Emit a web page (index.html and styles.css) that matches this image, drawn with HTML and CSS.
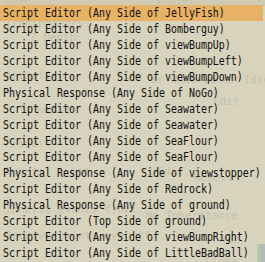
FILE: index.html
```html
<!DOCTYPE html>
<html>
<head>
  <meta charset="UTF-8">
  <title>Event list</title>
  <link rel="stylesheet" href="styles.css">
</head>
<body>
  <div class="screen">
    <!-- faded dialog behind the popup list -->
    <div class="ghost">
      <div class="ghost-head"><span>Name:</span><span class="g-player">Player</span><span class="g-arrow">▾</span></div>
      <div class="ghost-row g1"><span>Transparency:</span></div>
      <div class="ghost-row g2"><span class="g-ind">Z Depth:</span></div>
      <div class="ghost-row g3"><span>Animation:</span><span class="g-play">Play</span><span class="g-anim">er Underwater Idle rig</span></div>
      <div class="ghost-row g4"><span class="g-ind2">Sequence</span><span class="g-edit">Edit</span></div>
      <div class="ghost-row g5"><span>Preset:</span></div>
      <div class="ghost-row g6"><span>Events:</span><span class="g-add">Add</span><span class="g-edit2">Edit</span><span class="g-remove">Remove</span></div>
      <div class="ghost-row g7"><span>Inherit events from:</span><span class="g-inh">No Inheritance</span></div>
      <div class="ghost-row g8"><span>Receive events even if</span><span class="g-yes">Yes</span></div>
      <div class="ghost-row g9"><span class="g-close">Close</span></div>
    </div>

    <ul class="list">
      <li class="selected"><span class="label">Script Editor (Any Side of JellyFish)</span></li>
      <li><span class="label">Script Editor (Any Side of Bomberguy)</span></li>
      <li><span class="label">Script Editor (Any Side of viewBumpUp)</span></li>
      <li><span class="label">Script Editor (Any Side of viewBumpLeft)</span></li>
      <li><span class="label">Script Editor (Any Side of viewBumpDown)</span></li>
      <li><span class="label">Physical Response (Any Side of NoGo)</span></li>
      <li><span class="label">Script Editor (Any Side of Seawater)</span></li>
      <li><span class="label">Script Editor (Any Side of Seawater)</span></li>
      <li><span class="label">Script Editor (Any Side of SeaFlour)</span></li>
      <li><span class="label">Script Editor (Any Side of SeaFlour)</span></li>
      <li><span class="label">Physical Response (Any Side of viewstopper)</span></li>
      <li><span class="label">Script Editor (Any Side of Redrock)</span></li>
      <li><span class="label">Physical Response (Any Side of ground)</span></li>
      <li><span class="label">Script Editor (Top Side of ground)</span></li>
      <li><span class="label">Script Editor (Any Side of viewBumpRight)</span></li>
      <li><span class="label">Script Editor (Any Side of LittleBadBall)</span></li>
    </ul>
    <div class="edge"></div>
  </div>
</body>
</html>
```

FILE: styles.css
```css
body {
  margin: 0;
  background-color: #d7d3bd;
  font-family: "DejaVu Sans Mono", "Liberation Mono", monospace;
}
.screen {
  position: relative;
  width: 265px;
  height: 262px;
  overflow: hidden;
  background-color: #d7d3bd;
}

/* the dialog underneath, seen through the list */
.ghost {
  color: #c6c2ab;
  font-size: 11px;
  line-height: 12px;
}
.ghost span {
  display: inline-block;
}
.ghost-head {
  height: 5px;
  background-color: #cfcbb5;
  border-bottom: 1px solid #c4c0aa;
  display: flex;
  align-items: flex-end;
  overflow: hidden;
  padding-left: 5px;
}
.ghost-head span {
  margin-bottom: -2px;
}
.g-player { margin-left: 118px; }
.g-arrow { margin-left: 60px; }
.ghost-row {
  display: flex;
  padding-left: 5px;
  white-space: nowrap;
}
.g1 { margin-top: 12px; }
.g2 { margin-top: 2px; }
.g3 { margin-top: 26px; }
.g4 { margin-top: 10px; }
.g5 { margin-top: 22px; }
.g6 { margin-top: 16px; }
.g7 { margin-top: 20px; }
.g8 { margin-top: 8px; }
.g9 { margin-top: 10px; }
.g-ind { margin-left: 25px; }
.g-play { margin-left: 45px; }
.g-anim { margin-left: 8px; margin-top: 4px; }
.g-ind2 { margin-left: 15px; margin-top: 8px; }
.g-edit { margin-left: 140px; }
.g-add { margin-left: 18px; }
.g-edit2 { margin-left: 68px; }
.g-remove { margin-left: 10px; margin-top: 6px; }
.g-inh { margin-left: 8px; margin-top: 6px; }
.g-yes { margin-left: 70px; margin-top: 4px; }
.g-close { margin-left: 200px; }

/* popup list */
.list {
  position: absolute;
  top: 5px;
  left: 0;
  right: 0;
  margin: 0;
  padding: 0;
  list-style: none;
  color: #101010;
  font-size: 12px;
}
.list li {
  height: 16px;
  line-height: 16px;
  padding-left: 3px;
  margin-right: 2px;
  white-space: nowrap;
}
.list li.selected {
  background-color: #e8b264;
}
.label {
  display: inline-block;
  transform: scaleX(0.83);
  transform-origin: left center;
}
.edge {
  position: absolute;
  right: 0;
  bottom: 0;
  width: 8px;
  height: 18px;
  background: linear-gradient(90deg, #a9c29a, #7fa7a0 60%, #8ea0c0);
  opacity: 0.5;
}
```
